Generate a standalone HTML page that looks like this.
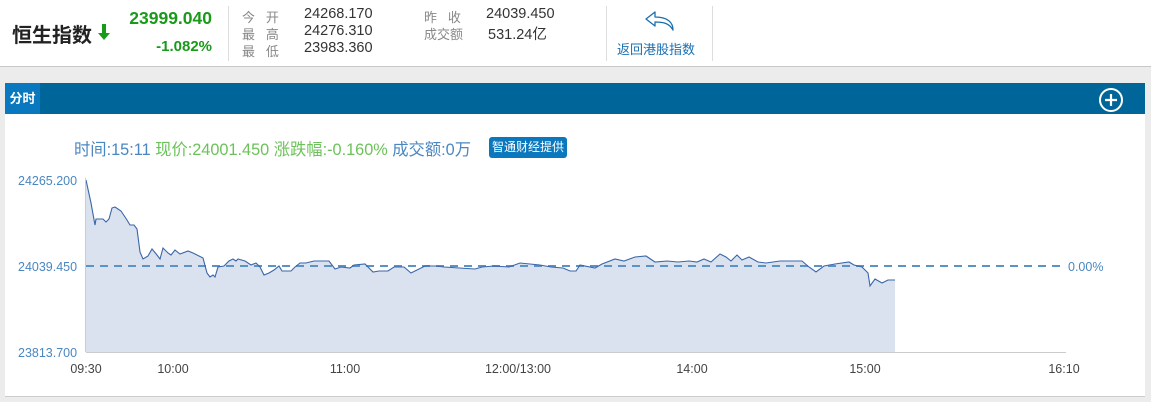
<!DOCTYPE html>
<html><head><meta charset="utf-8"><style>
*{margin:0;padding:0;box-sizing:border-box}
body{width:1151px;height:402px;background:#ececec;font-family:"Liberation Sans","Noto Sans CJK SC",sans-serif;position:relative;overflow:hidden}
.hdr{position:absolute;left:0;top:0;width:1151px;height:67px;background:#fff;border-bottom:1px solid #c8c8c8}
.a{position:absolute;white-space:nowrap}
.lab{color:#888;font-size:13px;letter-spacing:0}
.val{color:#333;font-size:14.5px}
.div{position:absolute;top:6px;height:55px;width:1px;background:#ddd}
</style></head><body>
<div class="hdr">
<div class="a" style="left:12px;top:19px;font-size:20px;font-weight:bold;color:#222">恒生指数</div>
<svg class="a" style="left:97px;top:23px" width="14" height="18"><path d="M5 1h4v9h4L7 17 1 10h4z" fill="#1a9a1a"/></svg>
<div class="a" style="left:112px;top:8px;width:100px;text-align:right;font-size:17.5px;font-weight:bold;color:#1a9a1a">23999.040</div>
<div class="a" style="left:112px;top:38px;width:100px;text-align:right;font-size:15px;font-weight:bold;color:#1a9a1a">-1.082%</div>
<div class="div" style="left:228px"></div>
<div class="a lab" style="left:242px;top:7px">今&nbsp;&nbsp;&nbsp;开</div>
<div class="a lab" style="left:242px;top:24px">最&nbsp;&nbsp;&nbsp;高</div>
<div class="a lab" style="left:242px;top:41px">最&nbsp;&nbsp;&nbsp;低</div>
<div class="a val" style="left:304px;top:6px">24268.170</div>
<div class="a val" style="left:304px;top:23px">24276.310</div>
<div class="a val" style="left:304px;top:40px">23983.360</div>
<div class="a lab" style="left:424px;top:7px">昨&nbsp;&nbsp;&nbsp;收</div>
<div class="a lab" style="left:424px;top:24px">成交额</div>
<div class="a val" style="left:486px;top:6px">24039.450</div>
<div class="a val" style="left:488px;top:23px">531.24亿</div>
<div class="div" style="left:606px"></div>
<svg class="a" style="left:643px;top:10px" width="34" height="22"><path d="M12 2 3 9l9 7v-4c8 0 14 1 18 8 0-8-6-13-18-13z" fill="none" stroke="#1a6fb0" stroke-width="1.3" stroke-linejoin="round"/></svg>
<div class="a" style="left:617px;top:39px;font-size:13px;color:#1a6fb0">返回港股指数</div>
<div class="div" style="left:712px"></div>
</div>
<div class="a" style="left:5px;top:83px;width:1140px;height:314px;background:#fff;border-bottom:1px solid #ccc"></div>
<div class="a" style="left:5px;top:83px;width:1140px;height:31px;background:#006699"></div>
<div class="a" style="left:5px;top:83px;width:35px;height:31px;background:#0a78be;color:#fff;font-size:13px;line-height:31px;text-align:center;font-weight:bold">分时</div>
<svg class="a" style="left:1098px;top:87px" width="26" height="26"><circle cx="13" cy="13" r="11" fill="none" stroke="#fff" stroke-width="2"/><path d="M13 7v12M7 13h12" stroke="#fff" stroke-width="2.2"/></svg>
<div class="a" style="left:74px;top:136px;font-size:16.3px;color:#4a87c0">时间:15:11 <span style="color:#6cc25a">现价:24001.450 涨跌幅:-0.160%</span> 成交额:0万</div>
<div class="a" style="left:489px;top:137px;width:78px;height:21px;background:#0a78be;border-radius:3px;color:#fff;font-size:12px;line-height:21px;text-align:center">智通财经提供</div>
<svg class="a" style="left:0;top:0" width="1151" height="402" font-family="Liberation Sans" font-size="12.5">
<polygon fill="#d9e2ee" points="86,352 86,180 91,203 95,225 96,219 103,219 106,222 109,219 112,208 115,207 121,211 127,220 130,225 134,225 137,229 140,252 143,259 148,256 152,249 157,255 160,259 163,248 168,253 171,255 175,250 180,254 188,251 193,253 203,258 207,273 210,277 213,275 215,277 218,267 224,266 229,261 233,259 236,261 238,259 245,261 251,265 256,263 260,267 264,275 269,273 274,270 279,266 282,271 291,271 295,267 300,263 306,263 314,261 329,261 335,269 341,267 350,268 354,265 365,264 373,272 379,271 388,271 394,267 404,267 411,273 425,266 436,266 444,267 475,269 482,267 494,266 509,267 520,263 540,265 551,267 563,268 570,271 576,271 580,265 595,268 602,264 615,259 624,261 635,257 646,256 655,262 667,261 678,262 689,261 697,262 704,259 711,262 720,254 726,257 731,261 737,255 742,260 749,257 758,262 766,263 780,261 802,261 809,267 816,272 824,266 835,264 849,262 854,265 862,267 868,273 870,286 875,279 882,283 888,280 895,280 895,352"/>
<line x1="86" y1="266" x2="1062" y2="266" stroke="#5b93c7" stroke-width="2" stroke-dasharray="8,6"/>
<polyline fill="none" stroke="#3a66a8" stroke-width="1.1" points="86,180 91,203 95,225 96,219 103,219 106,222 109,219 112,208 115,207 121,211 127,220 130,225 134,225 137,229 140,252 143,259 148,256 152,249 157,255 160,259 163,248 168,253 171,255 175,250 180,254 188,251 193,253 203,258 207,273 210,277 213,275 215,277 218,267 224,266 229,261 233,259 236,261 238,259 245,261 251,265 256,263 260,267 264,275 269,273 274,270 279,266 282,271 291,271 295,267 300,263 306,263 314,261 329,261 335,269 341,267 350,268 354,265 365,264 373,272 379,271 388,271 394,267 404,267 411,273 425,266 436,266 444,267 475,269 482,267 494,266 509,267 520,263 540,265 551,267 563,268 570,271 576,271 580,265 595,268 602,264 615,259 624,261 635,257 646,256 655,262 667,261 678,262 689,261 697,262 704,259 711,262 720,254 726,257 731,261 737,255 742,260 749,257 758,262 766,263 780,261 802,261 809,267 816,272 824,266 835,264 849,262 854,265 862,267 868,273 870,286 875,279 882,283 888,280 895,280"/>
<line x1="86" y1="352.5" x2="1066" y2="352.5" stroke="#ccc"/>
<line x1="85.5" y1="178" x2="85.5" y2="352" stroke="#ccc"/>
<g fill="#4a87c0"><text x="18" y="185">24265.200</text><text x="18" y="271">24039.450</text><text x="18" y="357">23813.700</text><text x="1068" y="271">0.00%</text></g>
<g fill="#444" text-anchor="middle"><text x="86" y="373">09:30</text><text x="173" y="373">10:00</text><text x="345" y="373">11:00</text><text x="518" y="373">12:00/13:00</text><text x="692" y="373">14:00</text><text x="865" y="373">15:00</text><text x="1064" y="373">16:10</text></g>
</svg>
</body></html>
